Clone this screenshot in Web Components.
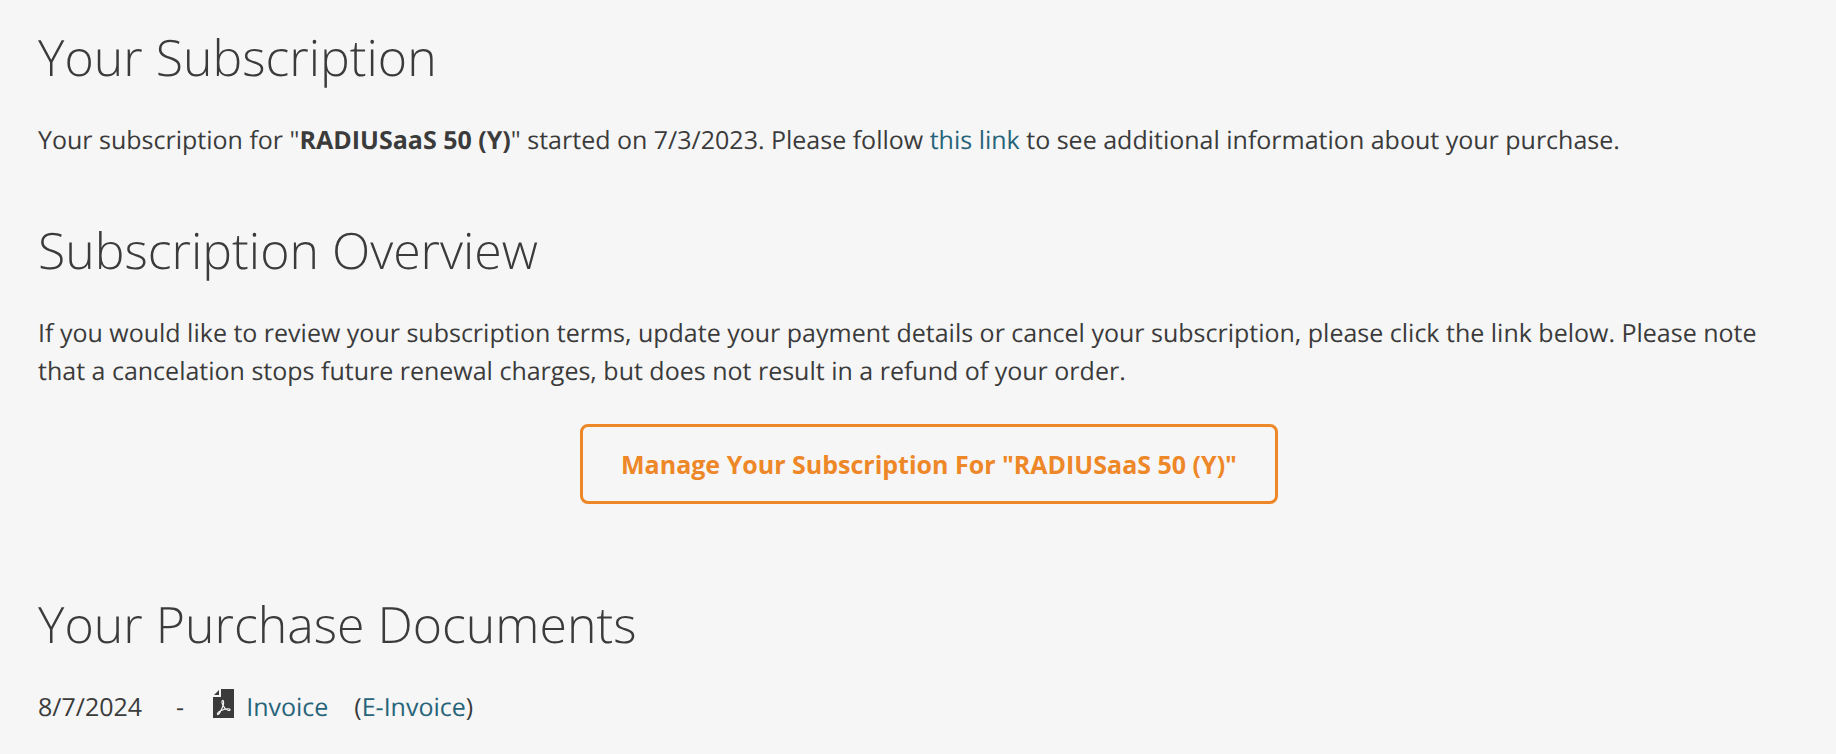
<!DOCTYPE html>
<html lang="en">
<head>
<meta charset="utf-8">
<title>Your Subscription</title>
<style>
body{margin:0;background:#f6f6f6;color:#3b3b3b;font:25px/38px "Open Sans",sans-serif;text-rendering:geometricPrecision}
</style>
</head>
<body>
<subscription-page></subscription-page>
<template id="page">
<style>
:host{display:block;padding:27px 16px 16px 38px}
main{display:block}
page-section:last-child{margin-bottom:0}
</style>
<main>
<page-section>
<span slot="title">Your Subscription</span>
Your subscription for "<b>RADIUSaaS 50 (Y)</b>" started on 7/3/2023. Please follow <text-link>this link</text-link> to see additional information about your purchase.
</page-section>
<page-section>
<span slot="title">Subscription Overview</span>
If you would like to review your subscription terms, update your payment details or cancel your subscription, please click the link below. Please note that a cancelation stops future renewal charges, but does not result in a refund of your order.
<manage-button slot="action">Manage Your Subscription For "RADIUSaaS 50 (Y)"</manage-button>
</page-section>
<page-section>
<span slot="title">Your Purchase Documents</span>
<purchase-document date="8/7/2024"></purchase-document>
</page-section>
</main>
</template>
<script>
const define = (name, html) => customElements.define(name, class extends HTMLElement {
  constructor() {
    super();
    this.attachShadow({mode: "open"}).innerHTML = html;
  }
});
define("text-link", `<style>:host{display:inline}a{color:#27647a;text-decoration:none}</style><a href="#"><slot></slot></a>`);
define("manage-button", `<style>
:host{display:flex;justify-content:center;padding:34px 0 29px}
button{font:inherit;font-weight:700;color:#ee8727;background:transparent;border:3px solid #ee8727;border-radius:8px;padding:18px 38px;cursor:pointer}
</style><button type="button"><slot></slot></button>`);
define("page-section", `<style>
:host{display:block;margin-bottom:61px}
h2{margin:0 0 34px;font-size:50px;line-height:60px;font-weight:300}
.body{padding-right:24px}
</style><section><h2><slot name="title"></slot></h2><div class="body"><slot></slot></div><slot name="action"></slot></section>`);
customElements.define("purchase-document", class extends HTMLElement {
  connectedCallback() {
    this.attachShadow({mode: "open"}).innerHTML = `<style>
:host{display:flex;align-items:center}
.dash{margin:0 29px 0 34px}
svg{width:21px;height:29px;margin:0 12px 8px 0}
.e{margin-left:26px}
</style><span>${this.getAttribute("date")}</span><span class="dash">-</span>
<svg viewBox="0 0 21 29" aria-hidden="true"><path fill="#3b3b3b" d="M8 0H21V29H0V8H8zM6 1V6H1z"/><g fill="none" stroke="#f6f6f6" stroke-width="1.2" stroke-linejoin="round"><path d="M9.5 11.5C8.5 12 9 14.5 10 16.5C11 18.5 13 20.5 15 21.3C17 22 17.5 20.5 16.5 20C14 19 10.5 20.5 7.5 21.8C5.5 22.8 4 24.3 4.5 25.3C5.5 26.5 7.5 22.5 8.5 20.5C9.5 18.5 10.8 14 10.5 12.5C10.4 11.7 10 11.3 9.5 11.5Z"/></g></svg>
<text-link>Invoice</text-link><span class="e">(<text-link>E-Invoice</text-link>)</span>`;
  }
});
customElements.define("subscription-page", class extends HTMLElement {
  constructor() {
    super();
    this.attachShadow({mode: "open"}).append(document.getElementById("page").content.cloneNode(true));
  }
});
</script>
</body>
</html>
